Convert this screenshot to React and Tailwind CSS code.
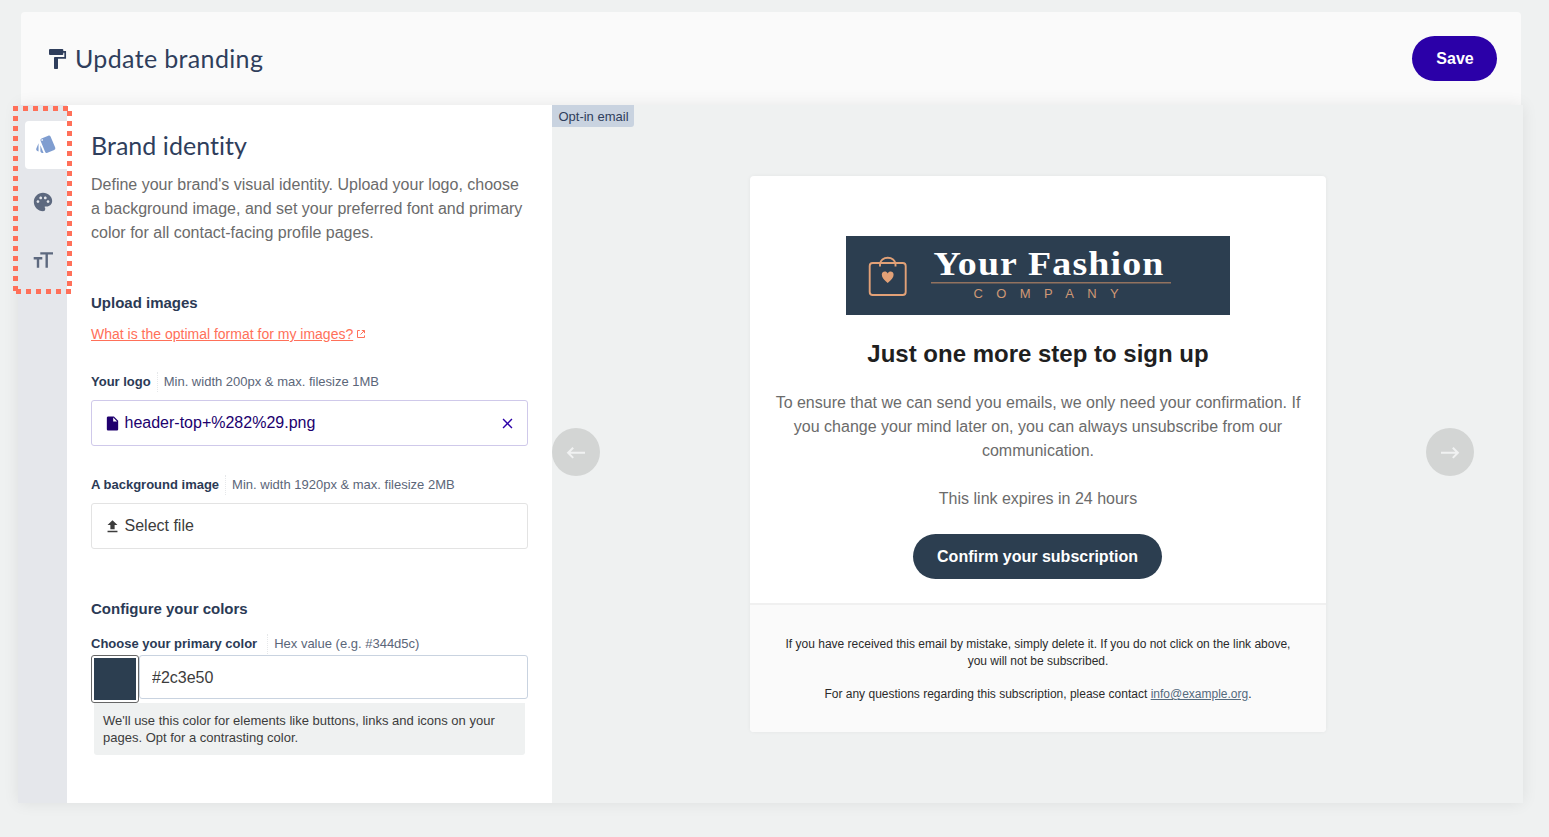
import React, { useState } from "react";
import {
  MdClose,
  MdFileUpload,
  MdInsertDriveFile,
  MdPalette,
  MdStyle,
} from "react-icons/md";

const DEFAULT_COLOR = "#2c3e50";

const FieldLabel = ({ title, hint, wide }) => (
  <div className="flex h-5 items-center text-[13px]">
    <span className="font-bold text-[#2b3a55]">{title}</span>
    <span
      className={
        wide
          ? "ml-[10px] h-5 border-l border-dotted border-[#e6e8ea] pl-[6px] text-[#5b6679]"
          : "ml-[6px] h-5 border-l border-dotted border-[#e6e8ea] pl-[6px] text-[#5b6679]"
      }
    >
      {hint}
    </span>
  </div>
);

const PaintRollerIcon = () => (
  <svg width="24" height="24" viewBox="0 0 24 24" fill="#2f3e5c">
    <rect x="4" y="2" width="14.3" height="6" rx="1" />
    <rect x="9" y="10" width="4" height="12" rx="0.8" />
    <path d="M18 4.8H20.2V10.8H10" fill="none" stroke="#2f3e5c" strokeWidth="1.7" />
  </svg>
);

const TextSizeIcon = () => (
  <svg width="24" height="24" viewBox="0 0 24 24" fill="none" stroke="#5d697f" strokeWidth="2.4">
    <path d="M9.3 5.4H22M15.7 5.4V19.8M2.7 10.3H11.3M7 10.3V19.8" />
  </svg>
);

const ExternalIcon = () => (
  <svg width="9" height="9" viewBox="0 0 9 9" fill="none" stroke="#ff7059" strokeWidth="1">
    <path d="M2.8 0.5H0.5V7.5H7.5V5.4M3.5 4.5L7.3 0.7M4.8 0.5H7.5V3.2" />
  </svg>
);

const CompanyLogo = () => (
  <svg width="384" height="79" viewBox="0 0 384 79" className="bg-[#2c3e50]">
    <g fill="none" stroke="#e2a177" strokeWidth="1.9">
      <rect x="23.7" y="27" width="36" height="32" rx="3" />
      <path d="M34 30.5V28.5C34 19.5 49.5 19.5 49.5 28.5V30.5" />
    </g>
    <path
      d="M41.7 47C38 43.5 35.8 41.5 35.8 38.7C35.8 35.2 40.2 34.5 41.7 37.5C43.2 34.5 47.6 35.2 47.6 38.7C47.6 41.5 45.4 43.5 41.7 47Z"
      fill="#e2a177"
    />
    <text
      x="87.5"
      y="39"
      textLength="231"
      lengthAdjust="spacingAndGlyphs"
      fill="#ffffff"
      className="font-['Liberation_Serif',serif] text-[33px] font-bold tracking-[1px]"
    >
      Your Fashion
    </text>
    <path d="M85 46.8H325" stroke="#92725f" strokeWidth="1.6" />
    <text
      x="127.5"
      y="62"
      fill="#cf9875"
      className="font-['Liberation_Sans',sans-serif] text-[13px] tracking-[13.4px]"
    >
      COMPANY
    </text>
  </svg>
);

// dotted frame around the tab icons
const TabsHighlight = () => (
  <svg
    className="pointer-events-none absolute -left-[5px] top-px"
    width="60"
    height="189"
    stroke="#ff7059"
    strokeWidth="5"
    strokeDasharray="5 5"
  >
    <path d="M0 2.5H55" />
    <path d="M56.5 5V182" />
    <path d="M2.5 0V186" />
    <path d="M3 185.5H58" />
  </svg>
);

const ArrowButton = ({ direction }) => (
  <button className="-mt-1 flex size-12 shrink-0 items-center justify-center rounded-full bg-[#d3d5d4]">
    <svg width="24" height="24" viewBox="0 0 24 24" fill="none" stroke="#f1f2f2" strokeWidth="2">
      {direction === "left" ? (
        <path d="M21 12.8H4.5M9.2 7.7L4.1 12.8L9.2 17.9" />
      ) : (
        <path d="M3 12.8H19.5M14.8 7.7L19.9 12.8L14.8 17.9" />
      )}
    </svg>
  </button>
);

const App = () => {
  const [color, setColor] = useState(DEFAULT_COLOR);
  const [logo, setLogo] = useState("header-top+%282%29.png");

  return (
    <div className="h-screen overflow-hidden bg-[#eff1f1] pt-3 font-['Liberation_Sans',Arial,sans-serif]">
      <header className="ml-[21px] flex h-[93px] w-[1500px] items-center justify-between rounded-t bg-[#fafafa] pl-6 pr-6">
        <h1 className="flex items-center gap-[6px] font-['Lato',sans-serif] text-[25px] leading-8 tracking-[0.35px] text-[#2f3e5c]">
          <PaintRollerIcon />
          <span className="-mt-px">Update branding</span>
        </h1>
        <button className="h-[45px] w-[85px] rounded-full bg-[#2b00a8] pl-px text-base font-bold text-white">
          Save
        </button>
      </header>

      <main className="relative ml-[18px] flex h-[698px] w-[1505px] rounded-b shadow-[0_0_16px_rgba(0,0,0,0.08)]">
        <nav className="w-[49px] bg-[#e5e7eb] pt-4">
          <div className="ml-[7px] flex h-12 items-center rounded-l bg-white pb-[2px] pl-[10px] text-[#7f9dd0]">
            <MdStyle size={22} />
          </div>
          <div className="mt-[9px] flex h-12 items-center pl-[14px] text-[#5d697f]">
            <MdPalette size={22} />
          </div>
          <div className="mt-[10px] flex h-12 items-center pl-[13px]">
            <TextSizeIcon />
          </div>
        </nav>

        <section className="w-[485px] bg-white px-6 pt-6">
          <h2 className="font-['Lato',sans-serif] text-[25px] leading-8 tracking-[0.05px] text-[#2f3e5c]">
            Brand identity
          </h2>
          <p className="mt-3 text-base text-[#6b6b6b]">
            Define your brand's visual identity. Upload your logo, choose a background image, and set
            your preferred font and primary color for all contact-facing profile pages.
          </p>

          <h3 className="mt-[47px] text-[15px] leading-[22px] font-bold text-[#2b3a55]">
            Upload images
          </h3>
          <a href="#" className="mt-[10px] flex h-5 items-center gap-1 text-sm text-[#ff7059]">
            <span className="underline">What is the optimal format for my images?</span>
            <ExternalIcon />
          </a>

          <div className="mt-7">
            <FieldLabel title="Your logo" hint="Min. width 200px & max. filesize 1MB" />
            <div className="mt-2 flex h-[46px] items-center rounded-[3px] border border-[#cfc9ea] px-[11.5px] text-[#20006e]">
              <MdInsertDriveFile size={17} />
              <span className="ml-1 flex-1">{logo}</span>
              <button onClick={() => setLogo("")} className="text-[#2b00a8]">
                <MdClose size={17} />
              </button>
            </div>
          </div>

          <div className="mt-[29px]">
            <FieldLabel title="A background image" hint="Min. width 1920px & max. filesize 2MB" />
            <div className="mt-2 flex h-[46px] items-center rounded-[3px] border border-[#e3e3e3] px-[11.5px] text-[#3c3c3c]">
              <MdFileUpload size={17} />
              <span className="ml-1">Select file</span>
            </div>
          </div>

          <h3 className="mt-[49px] text-[15px] leading-[22px] font-bold text-[#2b3a55]">
            Configure your colors
          </h3>
          <div className="mt-[14px]">
            <FieldLabel title="Choose your primary color" hint="Hex value (e.g. #344d5c)" wide />
            <div className="mt-px flex items-start">
              <div className="size-12 shrink-0 rounded-[3px] border border-[#666666] p-[2px]">
                <div className="size-full" style={{ backgroundColor: color }} />
              </div>
              <input
                value={color}
                onChange={(e) => setColor(e.target.value)}
                className="h-11 min-w-0 flex-1 rounded-[3px] border border-[#c9d3e0] px-3 pt-[2px] text-base text-[#3c3c3c] outline-none"
              />
            </div>
            <p className="mx-[3px] h-[52px] rounded-b-[3px] bg-[#eff1f1] px-[9px] pt-[9px] text-[13px] leading-[17px] text-[#3c3c3c]">
              We'll use this color for elements like buttons, links and icons on your pages. Opt for a
              contrasting color.
            </p>
          </div>
        </section>

        <section className="relative flex w-[971px] items-center bg-[#eff1f1]">
          <span className="absolute left-0 top-0 flex h-[22px] w-[82px] items-center justify-center rounded-br-[3px] bg-[#c9d3e0] pl-px pt-[2px] text-[13px] text-[#2f3e5c]">
            Opt-in email
          </span>
          <ArrowButton direction="left" />

          <div className="ml-[150px] mr-[100px] h-[556px] w-[576px] shrink-0 overflow-hidden rounded bg-white text-center shadow-[0_0_4px_rgba(0,0,0,0.05)]">
            <div className="flex h-[427px] flex-col items-center pt-[60px]">
              <CompanyLogo />
              <h2 className="mt-[23px] text-2xl font-bold text-[#1f1f1f]">
                Just one more step to sign up
              </h2>
              <p className="mt-[21px] px-5 text-base text-[#6b6b6b]">
                To ensure that we can send you emails, we only need your confirmation. If you change
                your mind later on, you can always unsubscribe from our communication.
              </p>
              <p className="mt-6 text-base text-[#6b6b6b]">This link expires in 24 hours</p>
              <button
                className="mr-px mt-[23px] h-[45px] w-[249px] rounded-full text-base font-bold text-white"
                style={{ backgroundColor: color }}
              >
                Confirm your subscription
              </button>
            </div>
            <footer className="h-[129px] border-t-2 border-[#f0f0f0] bg-[#fafafa] px-8 pt-[31px] text-xs leading-[17px] text-[#2b2b2b]">
              <p>
                If you have received this email by mistake, simply delete it. If you do not click on
                the link above, you will not be subscribed.
              </p>
              <p className="mt-4">
                For any questions regarding this subscription, please contact{" "}
                <a href="#" className="text-[#546a7d] underline">
                  info@example.org
                </a>
                .
              </p>
            </footer>
          </div>

          <ArrowButton direction="right" />
        </section>

        <TabsHighlight />
      </main>
    </div>
  );
};

export default App;
